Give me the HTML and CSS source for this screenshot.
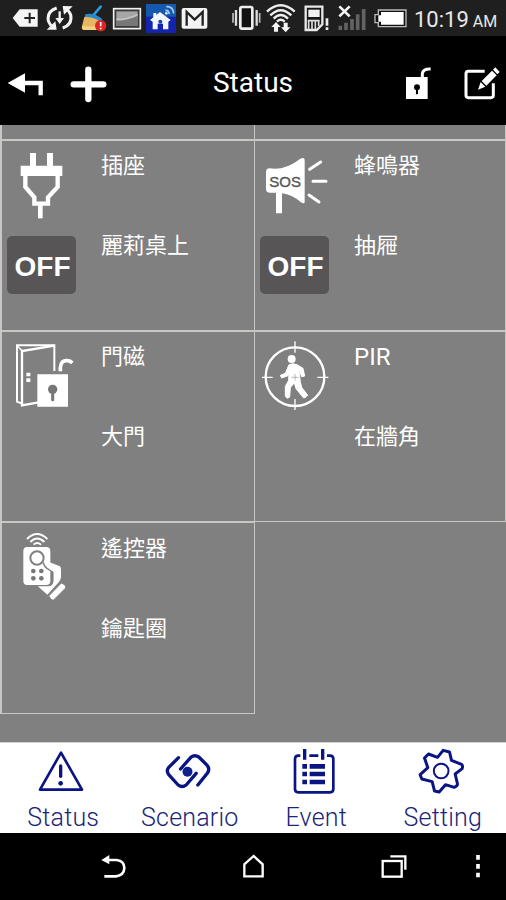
FILE: index.html
```html
<!DOCTYPE html>
<html lang="zh-Hant">
<head>
  <meta charset="UTF-8" />
  <meta name="viewport" content="width=device-width, initial-scale=1.0"/>
  <title>Status</title>
  <link rel="stylesheet" href="styles.css">
</head>
<body>
  <div class="status-bar">
    <div class="status-icons">
      <svg width="29" height="36" viewBox="36 0 87 108">
        <path d="M38 54L59 28H113V80H59Z" fill="#f4f4f4"/>
        <path d="M73 54H105M89 38V70" stroke="#222" stroke-width="6"/>
      </svg>
      <svg width="31" height="36" viewBox="135 0 93 108">
        <g fill="none" stroke="#f4f4f4" stroke-width="9">
          <path d="M170 24Q140 34 145 62Q149 76 163 84"/>
          <path d="M188 84Q218 74 212 44Q207 31 193 24"/>
          <path d="M179 34V60" stroke-width="7"/>
        </g>
        <path d="M140 89L170 89L166 64ZM218 19L188 18L192 44ZM166 54H192L179 72Z" fill="#f4f4f4"/>
      </svg>
      <svg width="28" height="36" viewBox="240 0 84 108">
        <path d="M302 20L278 48" stroke="#2d9be0" stroke-width="8" stroke-linecap="round"/>
        <path d="M256 43Q280 36 307 57L302 66Q276 50 254 52Z" fill="#2789d0"/>
        <path d="M253 51Q280 49 302 65L292 90H252Q242 88 247 74Z" fill="#e8b660"/>
        <path d="M248 77Q268 82 290 78L288 90H252Q244 87 248 77Z" fill="#f3d083"/>
        <circle cx="302" cy="77" r="17" fill="#df2522"/>
        <path d="M302 66V79M302 83V88" stroke="#fff" stroke-width="5"/>
      </svg>
      <svg width="30" height="36" viewBox="336 0 90 108">
        <rect x="341" y="26" width="80" height="60" fill="#3a3a3a" stroke="#f0f0f0" stroke-width="5"/>
        <rect x="349" y="34" width="64" height="44" fill="#a6a6a6"/>
        <path d="M349 62Q378 63 413 48V78H349Z" fill="#777"/>
        <path d="M349 58Q380 60 413 44" fill="none" stroke="#c9c9c9" stroke-width="4"/>
      </svg>
      <svg width="30" height="36" viewBox="438 0 90 108">
        <rect x="438" y="12" width="90" height="87" fill="#1424ae"/>
        <rect x="438" y="12" width="90" height="38" fill="#1658ae"/>
        <path d="M450 60L480 36L512 60L505 65V88H489V71H473V88H458V65Z" fill="#f2f6ff"/>
        <rect x="460" y="39" width="9" height="16" fill="#f2f6ff"/>
        <circle cx="481" cy="65" r="6" fill="#1840b0"/>
        <path d="M496 31Q506 30 508 42M499 20Q519 19 521 40" fill="none" stroke="#a9cdf2" stroke-width="5"/>
        <circle cx="499" cy="40" r="4" fill="#dcecff"/>
      </svg>
      <svg width="29" height="36" viewBox="540 0 87 108">
        <rect x="545" y="24" width="77" height="62" rx="6" fill="#f4f4f4"/>
        <path d="M560 77V36L584 59L608 36V77" fill="none" stroke="#222" stroke-width="7"/>
      </svg>
    </div>
    <div class="status-icons status-right">
      <svg width="31" height="36" viewBox="33 0 93 108">
        <rect x="61" y="21" width="36" height="65" rx="5" fill="#111" stroke="#eee" stroke-width="8"/>
        <path d="M48 30V77M110 30V77" stroke="#ddd" stroke-width="7"/>
        <path d="M39 39V68M119 39V68" stroke="#bbb" stroke-width="5"/>
      </svg>
      <svg width="30" height="36" viewBox="138 0 90 108">
        <g fill="none" stroke="#eee" stroke-width="7">
          <path d="M141 35Q182 -3 224 35"/>
          <path d="M151 46Q182 15 214 46"/>
          <path d="M161 56Q182 34 204 56"/>
          <path d="M171 65Q182 54 194 65"/>
        </g>
        <path d="M168 66L182 81H174V95H162V81H154ZM197 97L183 82H191V68H203V82H211Z" fill="#f5f5f5"/>
      </svg>
      <svg width="33" height="36" viewBox="240 0 99 108">
        <path d="M257 20H307V73L290 90H257Z" fill="#161616" stroke="#e8e8e8" stroke-width="7"/>
        <rect x="265" y="29" width="34" height="22" fill="#f0f0f0"/>
        <path d="M263 62H299M266 62V87M276 62V87M286 62V87M296 62V78" stroke="#ddd" stroke-width="5"/>
        <path d="M321 55V77M321 82V90" stroke="#eee" stroke-width="8"/>
      </svg>
      <svg width="32" height="36" viewBox="351 0 96 108">
        <path d="M361 77V90M378 68V90M396 57V90M413 43V90M431 27V90" stroke="#626262" stroke-width="11"/>
        <path d="M358 19L389 49M389 19L358 49" stroke="#f4f4f4" stroke-width="8"/>
      </svg>
      <svg width="36" height="36" viewBox="459 0 108 108">
        <path d="M475 30H558V80H475V68H465V44H475Z" fill="#111" stroke="#bbb" stroke-width="4"/>
        <path d="M483 36H551V74H483V65H475V46H483Z" fill="#fff"/>
      </svg>
      <div class="clock">10:19<span class="ampm">AM</span></div>
    </div>
  </div>

  <header class="header">
    <div class="header-left">
      <svg width="50" height="89" viewBox="0 0 150 267">
        <path d="M23 141L75 112V170Z" fill="#fff"/>
        <path d="M70 141H122V178" fill="none" stroke="#fff" stroke-width="13"/>
      </svg>
      <svg width="56" height="89" viewBox="180 0 168 267">
        <path d="M221 145H310M265 101V189" stroke="#fff" stroke-width="19" stroke-linecap="round"/>
      </svg>
    </div>
    <h1 class="title">Status</h1>
    <div class="header-right">
      <svg width="40" height="89" viewBox="1200 0 120 267">
        <rect x="1218" y="123" width="65" height="66" fill="#fff"/>
        <path d="M1267 125V113Q1269 98 1292 99" fill="none" stroke="#fff" stroke-width="9"/>
        <circle cx="1251" cy="154" r="9" fill="#000"/>
        <path d="M1251 157V175" stroke="#000" stroke-width="6"/>
      </svg>
      <svg width="46" height="89" viewBox="1380 0 138 267">
        <path d="M1454 106H1405Q1398 106 1398 113V178Q1398 185 1405 185H1473Q1480 185 1480 178V142" fill="none" stroke="#fff" stroke-width="9"/>
        <path d="M1434 161L1442 138L1456 152ZM1445 135L1476 104L1490 118L1459 149ZM1479 101L1486 94L1499 108L1492 115Z" fill="#fff"/>
      </svg>
    </div>
  </header>

  <main class="devices">
    <div class="cell peek"></div>
    <div class="cell peek"></div>

    <div class="cell">
      <div class="media">
        <svg width="70" height="95" viewBox="21 63 210 285">
          <path d="M62 137H90V99H108V137H141V99H159V137H187V168H62Z" fill="#fff"/>
          <path d="M76 165V201L103 232V251H144V232L173 201V165" fill="none" stroke="#fff" stroke-width="13"/>
          <path d="M121 248V295" stroke="#fff" stroke-width="14"/>
        </svg>
        <button class="switch">OFF</button>
      </div>
      <div class="info">
        <p>插座</p>
        <p>麗莉桌上</p>
      </div>
    </div>

    <div class="cell">
      <div class="media">
        <svg width="70" height="95" viewBox="30 63 210 285">
          <path d="M59 145Q105 152 151 116Q164 110 164 120V247Q163 253 153 247Q125 223 96 220V280H78V218H60Q48 218 48 206V156Q48 146 59 145Z" fill="#fff"/>
          <path d="M179 148L212 126M189 184H228M177 225L207 246" stroke="#fff" stroke-width="9" stroke-linecap="round"/>
          <text class="sos" x="58" y="202">SOS</text>
        </svg>
        <button class="switch">OFF</button>
      </div>
      <div class="info">
        <p>蜂鳴器</p>
        <p>抽屜</p>
      </div>
    </div>

    <div class="cell">
      <div class="media">
        <svg width="70" height="95" viewBox="21 21 210 285">
          <g fill="none" stroke="#fff">
            <path d="M163 138V61H51V230L66 236" stroke-width="6"/>
            <path d="M163 62L66 78V241L116 232" stroke-width="7"/>
            <path d="M51 62L68 79" stroke-width="4"/>
            <path d="M181 139V128Q183 104 203 107Q211 107 217 114" stroke-width="11"/>
          </g>
          <path d="M79 143H91V154H79ZM79 160H91V171H79ZM112 148H204V245H112Z" fill="#fff"/>
          <circle cx="158" cy="193" r="14" fill="#777"/>
          <path d="M158 200V224" stroke="#777" stroke-width="9" stroke-linecap="round"/>
        </svg>
      </div>
      <div class="info">
        <p>門磁</p>
        <p>大門</p>
      </div>
    </div>

    <div class="cell">
      <div class="media">
        <svg width="70" height="95" viewBox="30 21 210 285">
          <circle cx="135" cy="155" r="88" fill="none" stroke="#fff" stroke-width="7"/>
          <path d="M135 49V83M135 222V255M36 157H68M202 157H235" stroke="#fff" stroke-width="4"/>
          <circle cx="125" cy="102" r="12" fill="#fff"/>
          <path d="M117 119Q130 114 141 119L159 130L164 153L155 155L150 140L147 137L151 170L155 187L173 211L165 218H160L138 191L133 173L121 188L119 216L112 220L106 214V184L116 166L117 144L114 152L95 159L91 151L106 145Z" fill="#fff" stroke="#fff" stroke-width="3" stroke-linejoin="round"/>
          <path d="M124 157H146M135 147V167" stroke="#999" stroke-width="2"/>
        </svg>
      </div>
      <div class="info">
        <p class="latin">PIR</p>
        <p>在牆角</p>
      </div>
    </div>

    <div class="cell last">
      <div class="media">
        <svg width="70" height="95" viewBox="21 24 210 285">
          <path d="M81 72Q111 42 142 72M91 81Q111 60 133 81M101 89Q111 79 123 89" fill="none" stroke="#fff" stroke-width="6"/>
          <rect x="70" y="96" width="81" height="114" rx="12" fill="#fff"/>
          <path d="M130 142Q132 134 145 140L180 154Q183 157 183 165V187Q182 196 176 202L142 239L112 212H146Q160 210 160 198V172L141 160Q131 152 130 142Z" fill="#fff"/>
          <path d="M130 142Q131 153 141 160L158 171V198Q157 212 145 212H112" fill="none" stroke="#808080" stroke-width="4"/>
          <circle cx="111" cy="129" r="20" fill="#fff" stroke="#808080" stroke-width="6"/>
          <g fill="#777">
            <circle cx="100" cy="168" r="7"/>
            <circle cx="124" cy="168" r="7"/>
            <circle cx="100" cy="190" r="7"/>
            <circle cx="124" cy="190" r="7"/>
          </g>
          <path d="M146 243L184 204Q188 204 197 213V219L161 255H155Z" fill="#fff" stroke="#808080" stroke-width="3"/>
        </svg>
      </div>
      <div class="info">
        <p>遙控器</p>
        <p>鑰匙圈</p>
      </div>
    </div>
  </main>

  <nav class="tabs">
    <a class="tab">
      <svg viewBox="0 24 379.5 162">
        <path d="M183 53L120 164H246Z" fill="none" stroke="#0a1583" stroke-width="8" stroke-linejoin="round"/>
        <path d="M182 93V124" stroke="#0a1583" stroke-width="10" stroke-linecap="round"/>
        <circle cx="182" cy="145" r="7" fill="#0a1583"/>
      </svg>
      <span>Status</span>
    </a>
    <a class="tab">
      <svg viewBox="379.5 24 379.5 162">
        <g fill="none" stroke="#0a1583" stroke-width="10" stroke-linecap="round" stroke-linejoin="round">
          <path d="M534 68L504 98Q497 107 504 118L533 150Q545 159 557 150L587 115"/>
          <path d="M540 102L571 67Q582 58 595 66L620 91Q629 102 621 114L592 150"/>
        </g>
        <circle cx="561" cy="110" r="15" fill="#0f1f8b"/>
      </svg>
      <span>Scenario</span>
    </a>
    <a class="tab">
      <svg viewBox="0 24 379.5 162">
        <path d="M142 62H136Q126 62 126 72V162Q126 172 136 172H231Q241 172 241 162V72Q241 62 231 62H222M169 62H196" fill="none" stroke="#0a1583" stroke-width="8"/>
        <path d="M155 42V74M209 42V74" stroke="#0a1583" stroke-width="10"/>
        <path d="M148 94H162M170 94H216M148 117H162M170 117H216M148 141H162M170 141H216" stroke="#0a1583" stroke-width="14"/>
      </svg>
      <span>Event</span>
    </a>
    <a class="tab">
      <svg viewBox="379.5 24 379.5 162">
        <path d="M569 46L588 51L594 76L624 88Q629 91 626 101L605 117L612 147Q612 153 602 157L576 149L557 171L543 168L536 140L505 132L500 119L523 98L513 69L525 57L552 67Z" fill="none" stroke="#0a1583" stroke-width="9" stroke-linejoin="round"/>
        <circle cx="563" cy="108" r="22" fill="none" stroke="#0a1583" stroke-width="6"/>
      </svg>
      <span>Setting</span>
    </a>
  </nav>

  <footer class="nav-keys">
    <svg width="40" height="67" viewBox="279 294 120 201">
      <path d="M304 375L328 360V388Z" fill="#fff"/>
      <path d="M324 375H350Q373 378 373 399Q372 421 348 424H313" fill="none" stroke="#fff" stroke-width="8"/>
    </svg>
    <svg width="40" height="67" viewBox="699 294 120 201">
      <path d="M733 424V388L761 363L788 388V424Z" fill="none" stroke="#fff" stroke-width="7"/>
    </svg>
    <svg width="40" height="67" viewBox="360 294 120 201">
      <rect x="389" y="378" width="57" height="47" fill="none" stroke="#fff" stroke-width="7"/>
      <path d="M412 364H457V404" fill="none" stroke="#fff" stroke-width="7"/>
    </svg>
    <svg class="more" width="20" height="67" viewBox="647 294 60 201">
      <path d="M677 360V374M677 387V401M677 413V427" stroke="#fff" stroke-width="11"/>
    </svg>
  </footer>
</body>
</html>
```

FILE: styles.css
```css
/* === Reset and Base === */
* {
  margin: 0;
  padding: 0;
  box-sizing: border-box;
}

body {
  background: #000;
  color: #fff;
  font-family: Roboto, "Noto Sans CJK TC", sans-serif;
  height: 100vh;
  overflow: hidden;
  display: flex;
  flex-direction: column;
}

svg {
  display: block;
  flex: none;
}

/* === System status bar === */
.status-bar {
  display: flex;
  height: 36px;
  padding-left: 12px;
  background: #1f1f1f;
}

.status-icons {
  display: flex;
  gap: 4px;
}

.status-right {
  margin-left: 22px;
}

.clock {
  padding-left: 1px;
  font-size: 22px;
  line-height: 39px;
  color: #e8e8e8;
  white-space: nowrap;
}

.ampm {
  margin-left: 4px;
  font-size: 16px;
}

/* === Header === */
.header {
  display: grid;
  grid-template-columns: 1fr auto 1fr;
  height: 89px;
}

.header-left {
  display: flex;
  gap: 10px;
}

.header-right {
  display: flex;
  justify-content: flex-end;
  gap: 20px;
}

.title {
  font-size: 28px;
  font-weight: 400;
  line-height: 94px;
}

/* === Device grid === */
.devices {
  display: grid;
  grid-template-columns: 255px 251px;
  grid-template-rows: 15px 191px 191px 192px;
  height: 617px;
  background: #808080;
}

.cell {
  display: flex;
  gap: 24px;
  padding-left: 5px;
  border: 1px solid #c9c7c4;
  border-left: none;
}

.cell:nth-child(odd) {
  border-left: 2px solid #c9c7c4;
}

.peek {
  border-top: none;
}

.media {
  width: 70px;
}

.switch {
  display: block;
  width: 69px;
  height: 58px;
  padding-left: 2px;
  border: none;
  border-radius: 5px;
  background: #575556;
  color: #fff;
  font: bold 28px/62px "Liberation Sans", sans-serif;
}

.sos {
  font: 45px "Liberation Sans", sans-serif;
  fill: #555;
  stroke: #555;
  stroke-width: 1;
}

.info {
  display: flex;
  flex-direction: column;
  gap: 50px;
  padding-top: 10px;
  font-size: 22px;
  line-height: 30px;
}

.info .latin {
  font-size: 24px;
}

.last .info {
  padding-top: 11px;
}

/* === Bottom tabs === */
.tabs {
  display: grid;
  grid-template-columns: repeat(4, 1fr);
  height: 91px;
  background: #fff;
  border-top: 1px solid #d0d0d0;
}

.tab {
  text-align: center;
  color: #1a2479;
  font-size: 25px;
  font-weight: 300;
  letter-spacing: 0.2px;
  line-height: 42px;
}

.tab svg {
  width: 100%;
  height: 54px;
}

/* === Android keys === */
.nav-keys {
  display: flex;
  gap: 100px;
  height: 67px;
  padding-left: 93px;
}

.more {
  margin-left: -45px;
}
```
